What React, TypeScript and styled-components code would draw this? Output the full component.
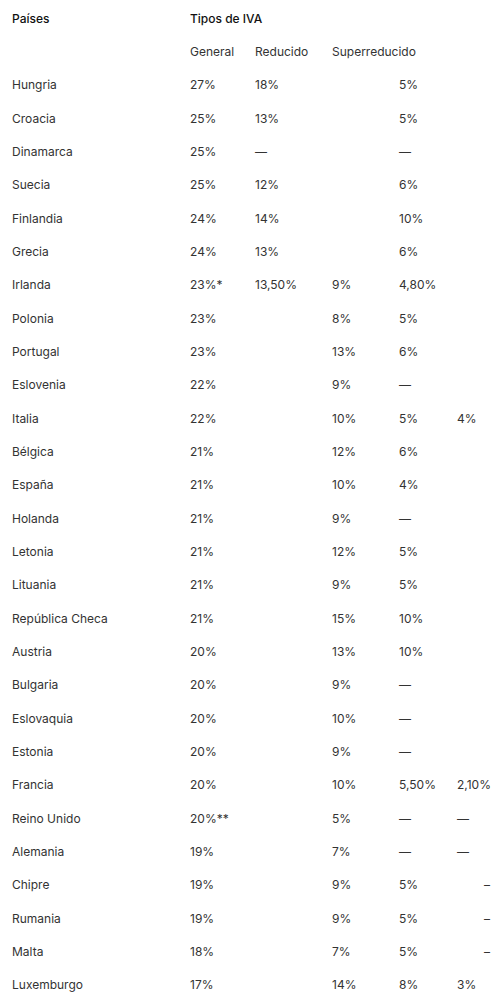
import React from "react";
import styled, { createGlobalStyle } from "styled-components";

const GlobalStyle = createGlobalStyle`
  html, body { margin: 0; padding: 0; background: #ffffff; }
  body { font-family: Inter, "Noto Sans", Arial, sans-serif; -webkit-font-smoothing: antialiased; }
`;

const Table = styled.div`
  display: flex;
  flex-direction: column;
  padding: 2px 0 0 12px;
  width: 490px;
  overflow: hidden;
`;

const Row = styled.div`
  display: grid;
  grid-template-columns: 178px 65px 77px 67px 58px 27px 1fr;
  height: 33.33px;
  align-items: center;
`;

const Cell = styled.div<{ $head?: boolean; $span?: number }>`
  font-size: 12px;
  line-height: 16px;
  letter-spacing: 0;
  white-space: nowrap;
  color: ${(p) => (p.$head ? "#111111" : "#333333")};
  font-weight: ${(p) => (p.$head ? 500 : 400)};
  grid-column: ${(p) => (p.$span ? `span ${p.$span}` : "auto")};
`;

const data: [string, string[]][] = [
  ["Hungria", ["27%", "18%", "", "5%"]],
  ["Croacia", ["25%", "13%", "", "5%"]],
  ["Dinamarca", ["25%", "—", "", "—"]],
  ["Suecia", ["25%", "12%", "", "6%"]],
  ["Finlandia", ["24%", "14%", "", "10%"]],
  ["Grecia", ["24%", "13%", "", "6%"]],
  ["Irlanda", ["23%*", "13,50%", "9%", "4,80%"]],
  ["Polonia", ["23%", "", "8%", "5%"]],
  ["Portugal", ["23%", "", "13%", "6%"]],
  ["Eslovenia", ["22%", "", "9%", "—"]],
  ["Italia", ["22%", "", "10%", "5%", "4%"]],
  ["Bélgica", ["21%", "", "12%", "6%"]],
  ["España", ["21%", "", "10%", "4%"]],
  ["Holanda", ["21%", "", "9%", "—"]],
  ["Letonia", ["21%", "", "12%", "5%"]],
  ["Lituania", ["21%", "", "9%", "5%"]],
  ["República Checa", ["21%", "", "15%", "10%"]],
  ["Austria", ["20%", "", "13%", "10%"]],
  ["Bulgaria", ["20%", "", "9%", "—"]],
  ["Eslovaquia", ["20%", "", "10%", "—"]],
  ["Estonia", ["20%", "", "9%", "—"]],
  ["Francia", ["20%", "", "10%", "5,50%", "2,10%"]],
  ["Reino Unido", ["20%**", "", "5%", "—", "—"]],
  ["Alemania", ["19%", "", "7%", "—", "—"]],
  ["Chipre", ["19%", "", "9%", "5%", "", "–"]],
  ["Rumania", ["19%", "", "9%", "5%", "", "–"]],
  ["Malta", ["18%", "", "7%", "5%", "", "–"]],
  ["Luxemburgo", ["17%", "", "14%", "8%", "3%"]],
];

export default function App() {
  return (
    <>
      <GlobalStyle />
      <Table>
        <Row>
          <Cell $head>Países</Cell>
          <Cell $head $span={6}>Tipos de IVA</Cell>
        </Row>
        <Row>
          <Cell />
          <Cell>General</Cell>
          <Cell>Reducido</Cell>
          <Cell $span={2}>Superreducido</Cell>
        </Row>
        {data.map(([country, vals]) => (
          <Row key={country}>
            <Cell>{country}</Cell>
            {vals.map((v, i) => (
              <Cell key={i}>{v}</Cell>
            ))}
          </Row>
        ))}
      </Table>
    </>
  );
}
